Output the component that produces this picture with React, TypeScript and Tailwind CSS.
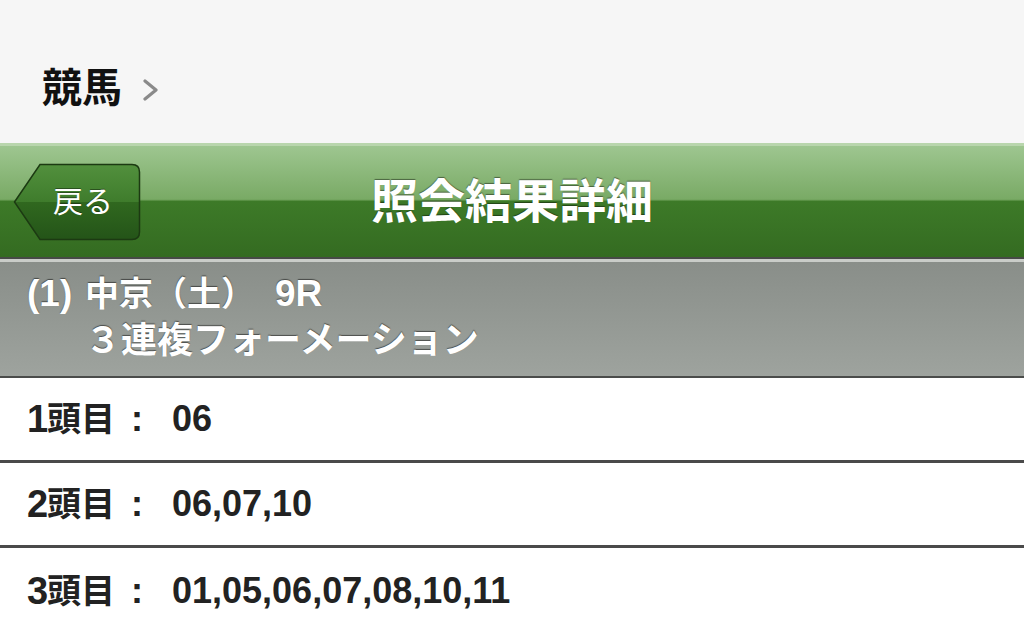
import React from "react";

const FONT = "font-['Liberation_Sans','Noto_Sans_CJK_JP',sans-serif]";

// 照会結果の行データ
const rows = [
  { no: "1", value: "06" },
  { no: "2", value: "06,07,10" },
  { no: "3", value: "01,05,06,07,08,10,11" },
];

function BackButton() {
  return (
    <button className="relative ml-[13px] h-[78px] w-[128px]" aria-label="戻る">
      <svg className="absolute inset-0" width="128" height="78" viewBox="0 0 128 78">
        <defs>
          <linearGradient id="backFill" x1="0" y1="0" x2="0" y2="1">
            <stop offset="0" stopColor="#52903d" />
            <stop offset="0.5" stopColor="#3f7c2c" />
            <stop offset="0.5" stopColor="#30681f" />
            <stop offset="1" stopColor="#245418" />
          </linearGradient>
        </defs>
        <path
          d="M1.5 39 L27 1.5 H119 Q126.5 1.5 126.5 9 V69 Q126.5 76.5 119 76.5 H27 Z"
          fill="url(#backFill)"
          stroke="#1c3a12"
          strokeWidth="1.5"
        />
      </svg>
      <span className="relative block pl-[12px] text-[30px] leading-none text-white [text-shadow:0_-1px_0_rgba(0,0,0,0.4)]">
        戻る
      </span>
    </button>
  );
}

export default function App() {
  return (
    <div className={`${FONT} h-[628px] w-[1024px] overflow-hidden bg-white`}>
      {/* パンくず */}
      <div className="flex h-[143px] items-center gap-[20px] bg-[#f6f6f6] pl-[42px] pt-[33px]">
        <span className="text-[40px] font-bold leading-none text-[#111]">競馬</span>
        <svg width="18" height="22" viewBox="0 0 18 22" className="mt-[4px]">
          <polyline points="3,2 14,11 3,20" fill="none" stroke="#8a8a8a" strokeWidth="3.2" strokeLinecap="round" strokeLinejoin="round" />
        </svg>
      </div>

      {/* ヘッダー */}
      <header className="grid h-[116px] grid-cols-[1fr_auto_1fr] items-center border-t-[3px] border-b-[2px] border-t-[#b9d6ad] border-b-[#474a46] bg-[linear-gradient(to_bottom,#9ec690_0%,#79aa65_48%,#3d7a28_50%,#346b21_100%)]">
        <div className="flex items-center">
          <BackButton />
        </div>
        <h1 className="text-[47px] font-bold leading-none text-white [text-shadow:0_-1px_1px_rgba(0,0,0,0.45)]">
          照会結果詳細
        </h1>
        <div />
      </header>

      {/* レース情報 */}
      <section className="h-[119px] border-t-[3px] border-b-[2px] border-t-[#c9ccc8] border-b-[#4a4c4a] bg-[linear-gradient(to_bottom,#898e89,#9ea39e)] pl-[27px] pt-[9px] font-bold text-white [text-shadow:0_-1px_1px_rgba(0,0,0,0.5)]">
        <div className="flex h-[46px] items-center">
          <span className="w-[58px] text-[37px]">(1)</span>
          <span className="text-[34px]">中京（土）</span>
          <span className="pl-[20px] text-[37px]">9R</span>
        </div>
        <div className="pl-[58px] text-[36px] leading-[48px]">３連複フォーメーション</div>
      </section>

      {/* 馬番 */}
      {rows.map((r, i) => (
        <div
          key={r.no}
          className={`flex h-[85px] items-center pl-[27px] font-bold leading-none text-[#222] ${
            i < rows.length - 1 ? "border-b-[3px] border-b-[#4a4a4a]" : ""
          }`}
        >
          <span className="w-[20px] text-[38px]">{r.no}</span>
          <span className="text-[34px]">頭目</span>
          <span className="w-[57px] pl-[16px] text-[36px]">:</span>
          <span className="text-[36px]">{r.value}</span>
        </div>
      ))}
    </div>
  );
}
